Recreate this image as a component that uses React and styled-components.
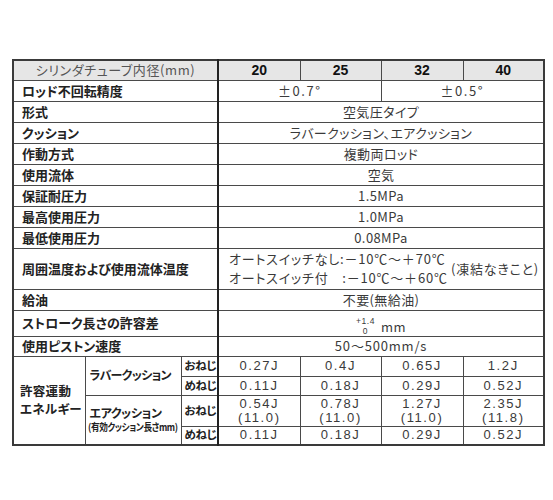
import React from 'react';
import styled, { createGlobalStyle } from 'styled-components';

const Global = createGlobalStyle`
  body {
    margin: 0;
    background: #fff;
    font-family: "Noto Sans CJK JP", "Noto Sans", sans-serif;
    font-feature-settings: "palt";
    color: #333;
  }
`;

const Page = styled.div`
  padding: 59px 0 0 12px;
`;

const Table = styled.table`
  border-collapse: collapse;
  table-layout: fixed;
  width: 531px;
  border: 2px solid #3a3a3a;
  font-size: 13px;
  line-height: 1.2;
`;

const Row = styled.tr`
  height: ${p => p.$h || 21}px;
`;

const Cell = styled.td`
  border: 1px solid #4a4a4a;
  padding: 0;
  vertical-align: middle;
  white-space: nowrap;
  overflow: hidden;
`;

const HeadCell = styled(Cell)`
  background: #e6e6e6;
  text-align: center;
  color: ${p => (p.$num ? '#111' : '#555')};
  font-weight: ${p => (p.$num ? 700 : 400)};
  font-family: ${p => (p.$num ? '"Liberation Sans", Arial, sans-serif' : 'inherit')};
  font-size: ${p => (p.$num ? 14 : 13)}px;
  letter-spacing: ${p => (p.$num ? 0 : 0.6)}px;
  border-right: ${p => (p.$edge ? '2px solid #222' : '1px solid #4a4a4a')};
`;

const Label = styled(Cell)`
  padding-left: ${p => p.$pl ?? 8}px;
  font-weight: 700;
  color: #222;
  font-size: ${p => p.$fs || 13}px;
  line-height: ${p => p.$lh || 1.2};
  letter-spacing: ${p => p.$ls || 0}px;
  border-right: ${p => (p.$edge ? '2px solid #222' : '1px solid #4a4a4a')};
`;

const Val = styled(Cell)`
  text-align: center;
  color: #3a3a3a;
  font-family: ${p => (p.$latin ? '"Liberation Sans", "Noto Sans CJK JP", sans-serif' : 'inherit')};
  letter-spacing: ${p => p.$ls || 0}px;
`;

const Small = styled.div`
  font-size: 10px;
  font-weight: 700;
  letter-spacing: -0.4px;
  margin-top: 1px;
  margin-left: -2px;
  transform: scaleX(0.86);
  transform-origin: left center;
`;

const TempBox = styled.div`
  display: flex;
  align-items: center;
  justify-content: space-between;
  padding: 0 4px 0 10px;
  color: #3a3a3a;
  letter-spacing: 0.8px;
`;

const TempLines = styled.div`
  display: flex;
  flex-direction: column;
  line-height: 18.5px;
`;

const Tol = styled.span`
  display: inline-flex;
  align-items: center;
  gap: 6px;
  letter-spacing: 0.5px;
`;

const Stack = styled.span`
  display: inline-flex;
  flex-direction: column;
  align-items: center;
  font-family: "Liberation Sans", Arial, sans-serif;
  font-size: 8.5px;
  line-height: 10px;
  margin-top: -3px;
`;

const Line = styled.div`
  line-height: 14px;
`;

const labels = [
  ['形式', '空気圧タイプ'],
  ['クッション', 'ラバークッション、エアクッション'],
  ['作動方式', '複動両ロッド'],
  ['使用流体', '空気'],
  ['保証耐圧力', '1.5MPa'],
  ['最高使用圧力', '1.0MPa'],
  ['最低使用圧力', '0.08MPa'],
];

const Energy = ({ vals }) => vals.map((v, i) => (
  <Val key={i} $ls={1.6} $latin>
    {Array.isArray(v) ? (
      <>
        <Line>{v[0]}</Line>
        <Line>{v[1]}</Line>
      </>
    ) : v}
  </Val>
));

export default function App() {
  return (
    <Page>
      <Global />
      <Table>
        <colgroup>
          <col style={{ width: 72 }} />
          <col style={{ width: 96 }} />
          <col style={{ width: 37 }} />
          <col style={{ width: 82 }} />
          <col style={{ width: 81 }} />
          <col style={{ width: 82 }} />
          <col style={{ width: 81 }} />
        </colgroup>
        <tbody>
          <Row $h={20}>
            <HeadCell colSpan={3} $edge>シリンダチューブ内径(mm)</HeadCell>
            <HeadCell $num>20</HeadCell>
            <HeadCell $num>25</HeadCell>
            <HeadCell $num>32</HeadCell>
            <HeadCell $num>40</HeadCell>
          </Row>
          <Row>
            <Label colSpan={3} $edge>ロッド不回転精度</Label>
            <Val colSpan={2} $ls={1.5}>±0.7°</Val>
            <Val colSpan={2} $ls={1.5}>±0.5°</Val>
          </Row>
          {labels.map(([l, v]) => (
            <Row key={l}>
              <Label colSpan={3} $edge>{l}</Label>
              <Val colSpan={4} $ls={0.4}>{v}</Val>
            </Row>
          ))}
          <Row $h={41}>
            <Label colSpan={3} $edge>周囲温度および使用流体温度</Label>
            <Cell colSpan={4}>
              <TempBox>
                <TempLines>
                  <span>オートスイッチなし:－10℃～＋70℃</span>
                  <span>オートスイッチ付　:－10℃～＋60℃</span>
                </TempLines>
                <span>(凍結なきこと)</span>
              </TempBox>
            </Cell>
          </Row>
          <Row>
            <Label colSpan={3} $edge>給油</Label>
            <Val colSpan={4} $ls={0.4}>不要(無給油)</Val>
          </Row>
          <Row $h={22}>
            <Label colSpan={3} $edge>ストローク長さの許容差</Label>
            <Val colSpan={4}>
              <Tol>
                <Stack><span>+1.4</span><span>0</span></Stack>
                <span>mm</span>
              </Tol>
            </Val>
          </Row>
          <Row $h={20}>
            <Label colSpan={3} $edge>使用ピストン速度</Label>
            <Val colSpan={4} $ls={0.8}>50～500mm/s</Val>
          </Row>
          <Row $h={20}>
            <Label rowSpan={4} $pl={6} $ls={0.3} $fs={12.5} $lh={1.45}>許容運動<br />エネルギー</Label>
            <Label rowSpan={2} $pl={4} $fs={12} $ls={-0.7}>ラバークッション</Label>
            <Label $pl={3} $fs={11.5} $ls={-0.4} $edge>おねじ</Label>
            <Energy vals={['0.27J', '0.4J', '0.65J', '1.2J']} />
          </Row>
          <Row $h={19}>
            <Label $pl={3} $fs={11.5} $ls={-0.4} $edge>めねじ</Label>
            <Energy vals={['0.11J', '0.18J', '0.29J', '0.52J']} />
          </Row>
          <Row $h={31}>
            <Label rowSpan={2} $pl={4} $fs={12} $ls={-0.4}>
              エアクッション
              <Small>(有効クッション長さmm)</Small>
            </Label>
            <Label $pl={3} $fs={11.5} $ls={-0.4} $edge>おねじ</Label>
            <Energy vals={[['0.54J', '(11.0)'], ['0.78J', '(11.0)'], ['1.27J', '(11.0)'], ['2.35J', '(11.8)']]} />
          </Row>
          <Row $h={19}>
            <Label $pl={3} $fs={11.5} $ls={-0.4} $edge>めねじ</Label>
            <Energy vals={['0.11J', '0.18J', '0.29J', '0.52J']} />
          </Row>
        </tbody>
      </Table>
    </Page>
  );
}
